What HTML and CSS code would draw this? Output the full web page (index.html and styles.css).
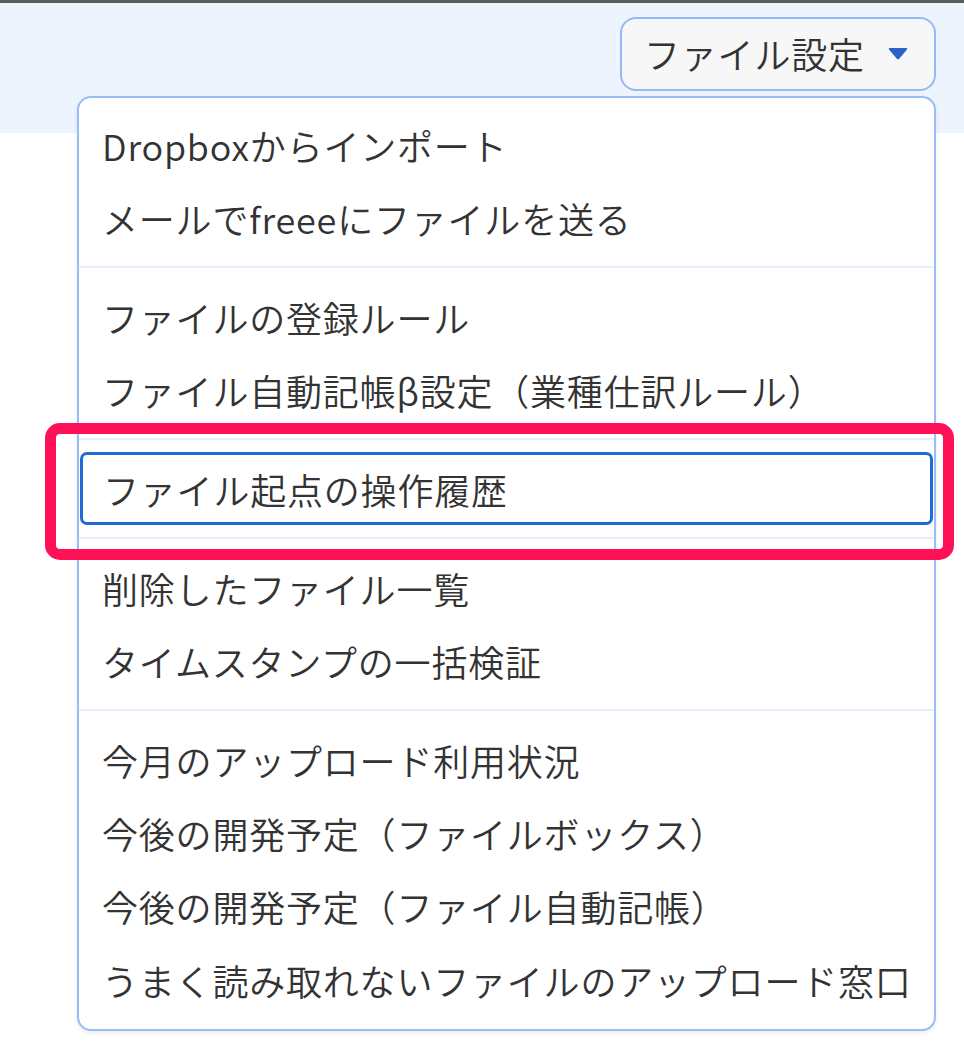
FILE: index.html
```html
<!DOCTYPE html>
<html lang="ja">
<head>
<meta charset="utf-8">
<link rel="stylesheet" href="styles.css">
</head>
<body>
<div class="topbar"></div>
<header class="band">
  <button class="file-btn" type="button">
    <span class="file-btn-label">ファイル設定</span>
    <svg class="caret" width="20" height="12" viewBox="0 0 20 12"><path d="M1 1.5 Q0 0 2 0 H18 Q20 0 19 1.5 L11.2 10.8 Q10 12 8.8 10.8 Z" fill="#2c62c6"/></svg>
  </button>
</header>

<div class="menu">
  <ul class="group">
    <li class="item">Dropboxからインポート</li>
    <li class="item">メールでfreeeにファイルを送る</li>
  </ul>
  <ul class="group">
    <li class="item">ファイルの登録ルール</li>
    <li class="item">ファイル自動記帳β設定（業種仕訳ルール）</li>
  </ul>
  <ul class="group">
    <li class="item focused">ファイル起点の操作履歴</li>
  </ul>
  <ul class="group">
    <li class="item">削除したファイル一覧</li>
    <li class="item">タイムスタンプの一括検証</li>
  </ul>
  <ul class="group last">
    <li class="item">今月のアップロード利用状況</li>
    <li class="item">今後の開発予定（ファイルボックス）</li>
    <li class="item">今後の開発予定（ファイル自動記帳）</li>
    <li class="item">うまく読み取れないファイルのアップロード窓口</li>
  </ul>
</div>

<div class="highlight"></div>
</body>
</html>
```

FILE: styles.css
```css
html, body {
  margin: 0;
  padding: 0;
  background: #ffffff;
}
body {
  font-family: "Noto Sans CJK JP", "Noto Sans", sans-serif;
  font-weight: 350;
  color: #333333;
  width: 964px;
  height: 1048px;
  overflow: hidden;
  position: relative;
}
.topbar {
  height: 3px;
  background: #5b5b5b;
}
.band {
  height: 130px;
  background: #eef4fe;
  display: flex;
  justify-content: flex-end;
  align-items: flex-start;
  padding: 14px 28px 0 0;
  box-sizing: border-box;
}
.file-btn {
  width: 316px;
  height: 74px;
  box-sizing: border-box;
  border: 2px solid #93b9f6;
  border-radius: 16px;
  background: #f7f7f8;
  display: flex;
  align-items: center;
  padding: 0 26px 2px 22px;
  font-family: inherit;
  font-weight: 350;
  color: #333333;
  cursor: pointer;
}
.file-btn-label {
  font-size: 36px;
  line-height: 1;
  flex: 1;
  text-align: left;
  letter-spacing: 0.8px;
}
.caret {
  display: block;
  margin-top: 2px;
}
.menu {
  position: absolute;
  left: 77px;
  top: 96px;
  width: 859px;
  box-sizing: border-box;
  background: #ffffff;
  border: 2px solid #98bdf8;
  border-radius: 14px;
  box-shadow: 0 2px 4px rgba(0, 0, 0, 0.08);
  padding: 0;
}
.group {
  list-style: none;
  margin: 0;
  padding: 12px 0;
  border-bottom: 2px solid #e6effd;
}
.group:first-child {
  padding-top: 10px;
}
.group.last {
  border-bottom: none;
  padding-bottom: 12px;
}
.group.last .item {
  height: 73.4px;
}
.item {
  height: 73px;
  display: flex;
  align-items: center;
  padding-left: 23px;
  font-size: 36px;
  letter-spacing: 0.8px;
  color: #333333;
  white-space: nowrap;
  box-sizing: border-box;
}
.item.focused {
  margin: 0 1px;
  border: 3px solid #1f6bd4;
  border-radius: 7px;
  padding-left: 20px;
}
.highlight {
  position: absolute;
  left: 45px;
  top: 423px;
  width: 909px;
  height: 137px;
  box-sizing: border-box;
  border: 11px solid #fe1156;
  border-radius: 15px;
  pointer-events: none;
}
```
